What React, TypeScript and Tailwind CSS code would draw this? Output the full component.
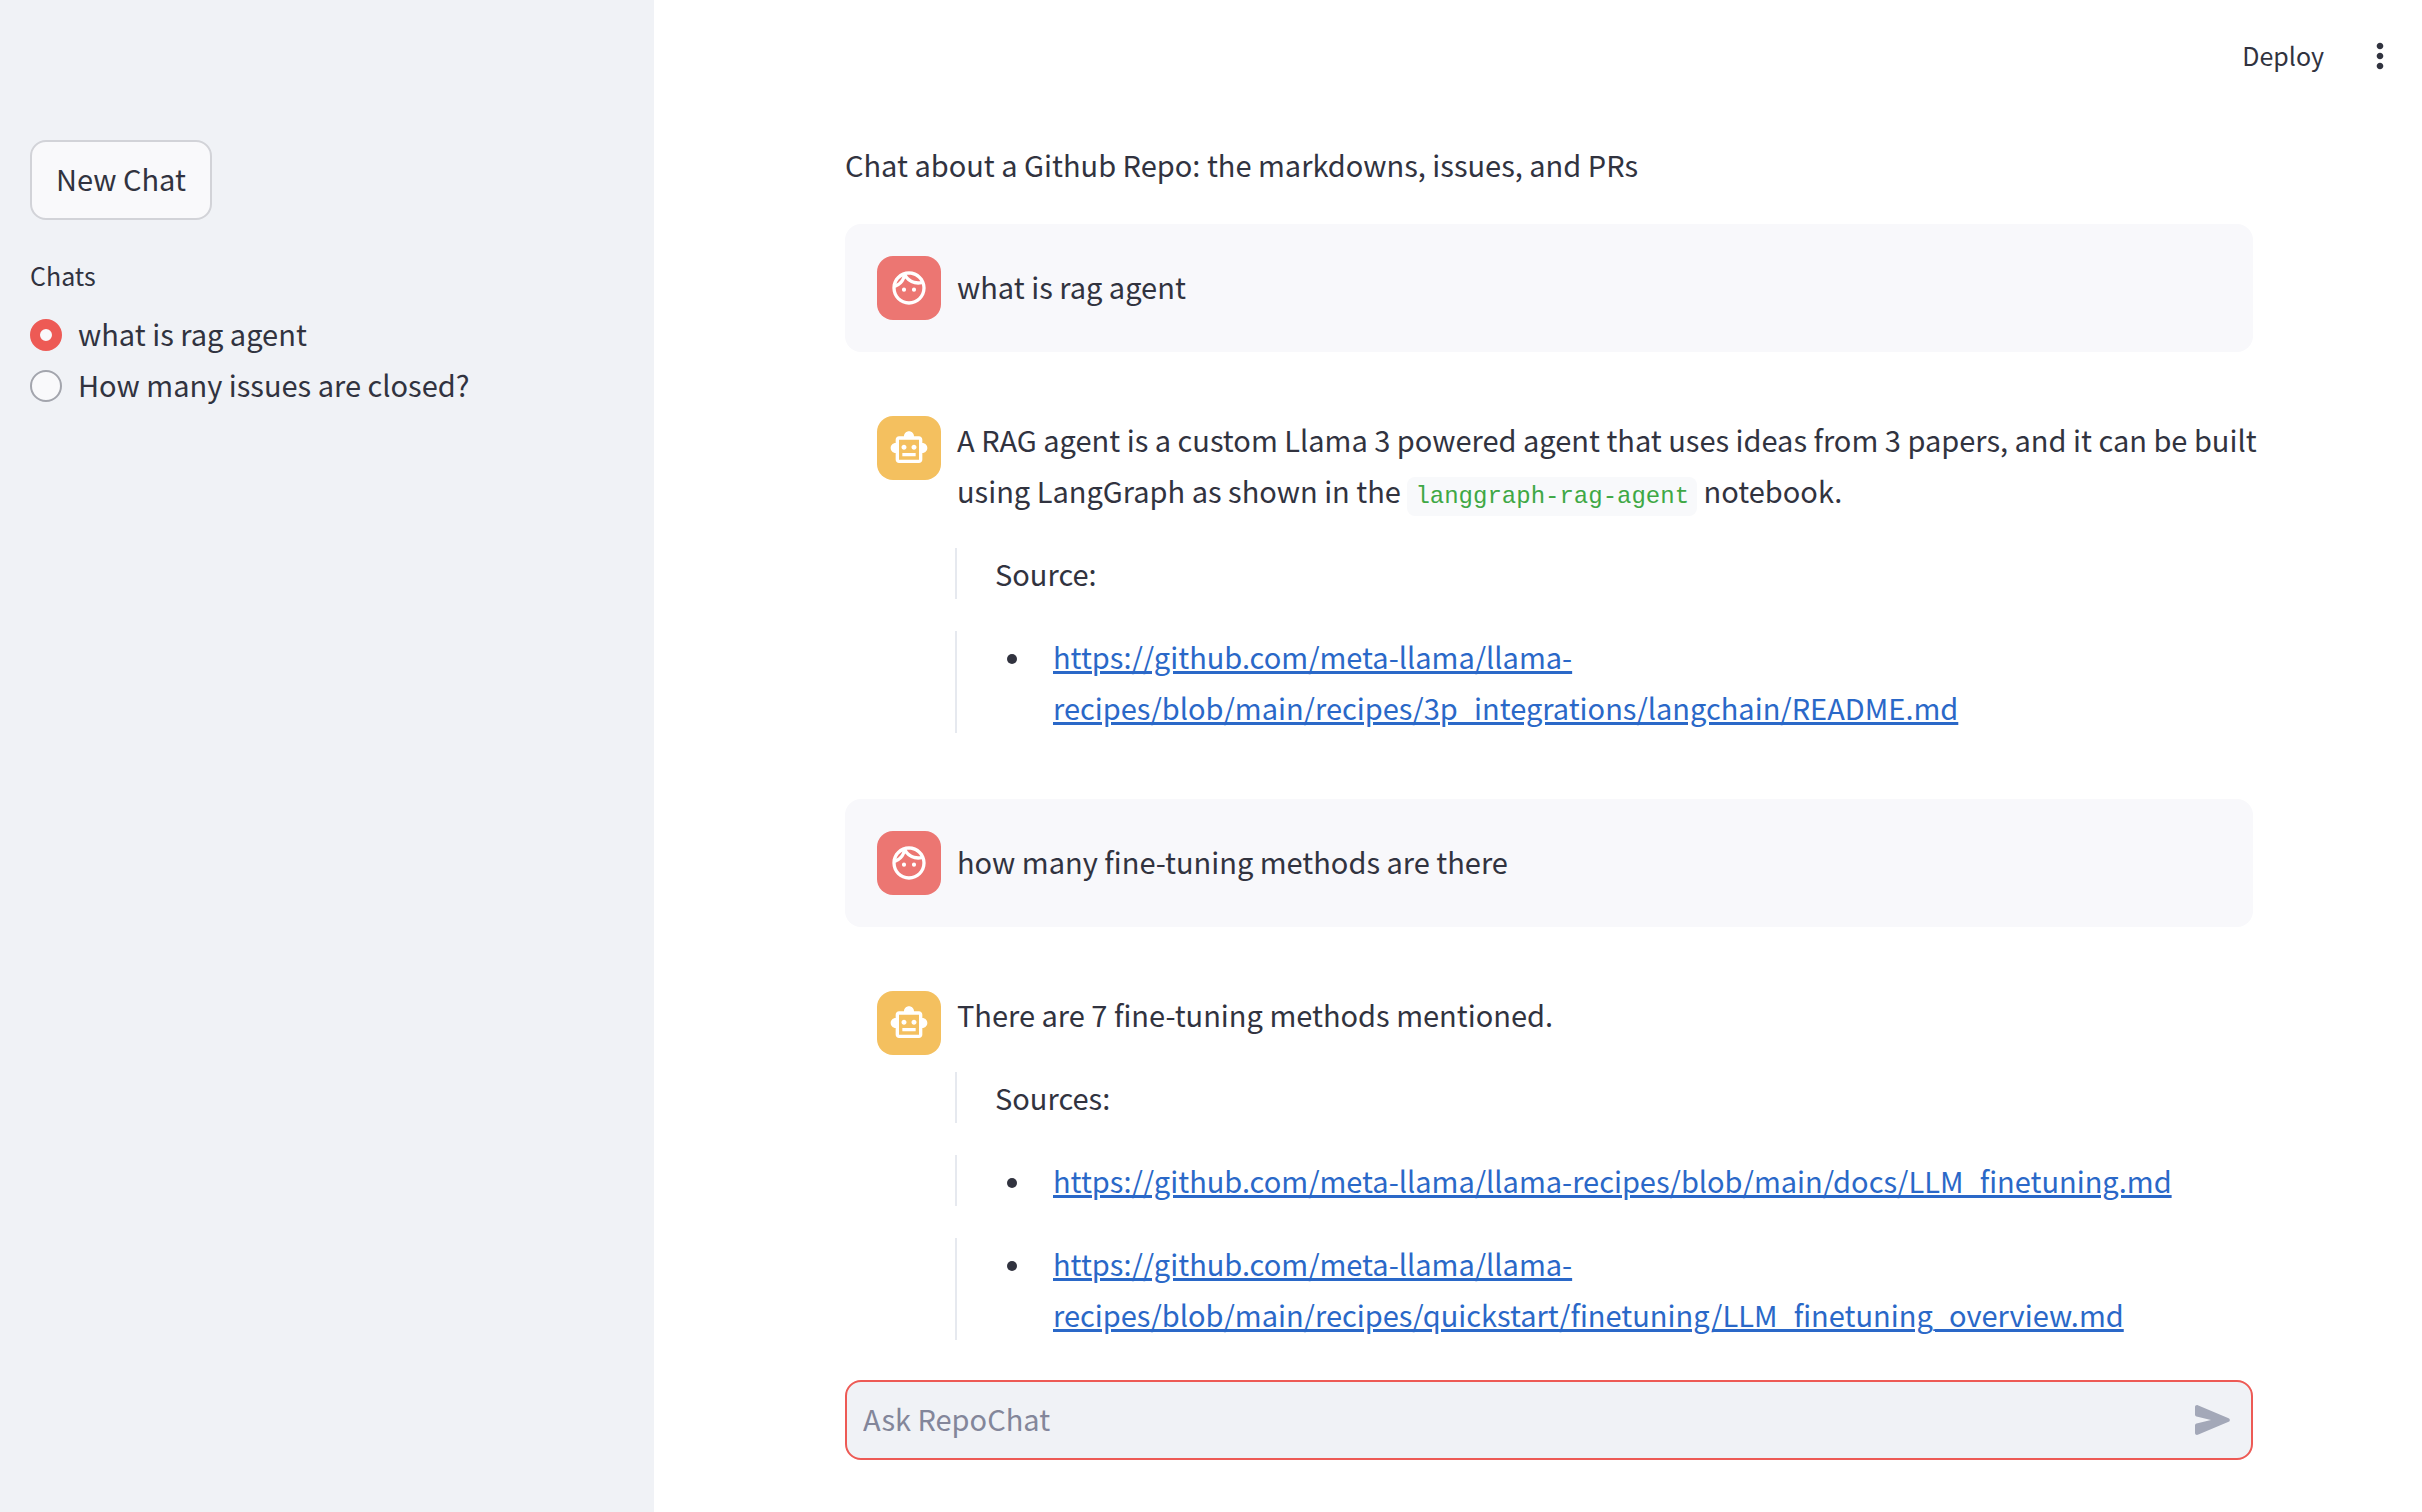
import type { ReactNode } from "react";
import { MdMoreVert, MdOutlineFace, MdOutlineSmartToy } from "react-icons/md";

const REPO = "https://github.com/meta-llama/llama-recipes/blob/main/";

function Message({ role, children }: { role: "user" | "assistant"; children: ReactNode }) {
  const user = role === "user";
  return (
    <article className={`flex gap-4 rounded-2xl py-8 pl-8 ${user ? "items-center bg-[#f8f8fb]" : "items-start"}`}>
      <div
        className={`flex size-16 shrink-0 items-center justify-center rounded-2xl text-white ${
          user ? "bg-[#ec7672]" : "bg-[#f4c05f]"
        }`}
      >
        {user ? <MdOutlineFace size={40} /> : <MdOutlineSmartToy size={40} />}
      </div>
      <div className={`-mr-2 flex min-w-0 flex-1 flex-col gap-8 ${user ? "pb-1" : "-mt-0.5 pb-0.5"}`}>{children}</div>
    </article>
  );
}

function Quote({ children }: { children: ReactNode }) {
  return <blockquote className="-ml-0.5 border-l-2 border-[#e6e9ef] pl-[38px]">{children}</blockquote>;
}

function SourceLink({ path }: { path: string }) {
  return (
    <Quote>
      <ul>
        <li className="flex">
          <span className="mt-[23px] mr-9 ml-3 size-2.5 shrink-0 rounded-full bg-[#31333f]" />
          <a href={REPO + path} className="min-w-0 text-[#2a68c8] underline decoration-3">
            {REPO + path}
          </a>
        </li>
      </ul>
    </Quote>
  );
}

function ChatOption({ label, checked }: { label: string; checked?: boolean }) {
  return (
    <label className="flex items-center gap-4">
      <input
        type="radio"
        name="chat"
        defaultChecked={checked}
        className="size-8 appearance-none rounded-full border-2 border-[#a3a5ad] bg-[#f9f9fb] checked:border-10 checked:border-[#ed5a55]"
      />
      <span className="pb-0.5 leading-[49px]">{label}</span>
    </label>
  );
}

export default function App() {
  return (
    <div className="flex min-h-screen bg-white font-['Noto_Sans_CJK_SC','Noto_Sans',sans-serif] text-[29px] leading-[51px] text-[#31333f]">
      <aside className="w-[654px] shrink-0 bg-[#f0f2f6] px-[30px] pt-[140px]">
        <button type="button" className="flex h-20 items-center rounded-2xl border-2 border-[#d2d3d8] bg-[#f9f9fb] px-6 pb-1">
          New Chat
        </button>
        <fieldset className="mt-8">
          <legend className="mb-[11px] text-[25px] leading-[46px]">Chats</legend>
          <ChatOption label="what is rag agent" checked />
          <ChatOption label="How many issues are closed?" />
        </fieldset>
      </aside>

      <div className="flex min-w-0 flex-1 flex-col">
        <header className="flex h-28 items-center justify-end gap-9 pr-[22px] text-[25px]">
          <button type="button" className="pb-0.5">
            Deploy
          </button>
          <button type="button" aria-label="Menu">
            <MdMoreVert size={40} />
          </button>
        </header>

        <div className="flex flex-1 flex-col pl-[22px]">
          <main className="mx-auto flex w-full max-w-[1408px] flex-1 flex-col gap-8 pt-[27px]">
            <p className="pb-0.5">Chat about a Github Repo: the markdowns, issues, and PRs</p>

            <Message role="user">
              <p>what is rag agent</p>
            </Message>

            <Message role="assistant">
              <p>
                A RAG agent is a custom Llama 3 powered agent that uses ideas from 3 papers, and it can be built using
                LangGraph as shown in the{" "}
                <code className="rounded-lg bg-[#f8f9fb] px-2 py-1.5 font-['Liberation_Mono',monospace] text-[24px] leading-none text-[#3fa845]">
                  langgraph-rag-agent
                </code>{" "}
                notebook.
              </p>
              <Quote>
                <p>Source:</p>
              </Quote>
              <SourceLink path="recipes/3p_integrations/langchain/README.md" />
            </Message>

            <Message role="user">
              <p>how many fine-tuning methods are there</p>
            </Message>

            <Message role="assistant">
              <p>There are 7 fine-tuning methods mentioned.</p>
              <Quote>
                <p>Sources:</p>
              </Quote>
              <SourceLink path="docs/LLM_finetuning.md" />
              <SourceLink path="recipes/quickstart/finetuning/LLM_finetuning_overview.md" />
            </Message>
          </main>

          <form className="mx-auto mb-[52px] flex h-20 w-full max-w-[1408px] items-center rounded-2xl border-2 border-[#ed5a55] bg-[#f0f2f6] pr-3.5 pl-4">
            <input
              type="text"
              aria-label="Ask RepoChat"
              placeholder="Ask RepoChat"
              className="min-w-0 flex-1 bg-transparent pb-1 outline-none placeholder:text-[#83869a]"
            />
            <button type="button" aria-label="Send" className="text-[#a3a8b8]">
              <svg viewBox="0 0 24 24" className="size-12" fill="currentColor">
                <path d="M3 5.51v3.71c0 .46.31.86.76.97L11 12l-7.24 1.81c-.45.11-.76.51-.76.97v3.71c0 .72.73 1.2 1.39.92l15.42-6.49c.82-.34.82-1.5 0-1.84L4.39 4.58C3.73 4.31 3 4.79 3 5.51z" />
              </svg>
            </button>
          </form>
        </div>
      </div>
    </div>
  );
}
